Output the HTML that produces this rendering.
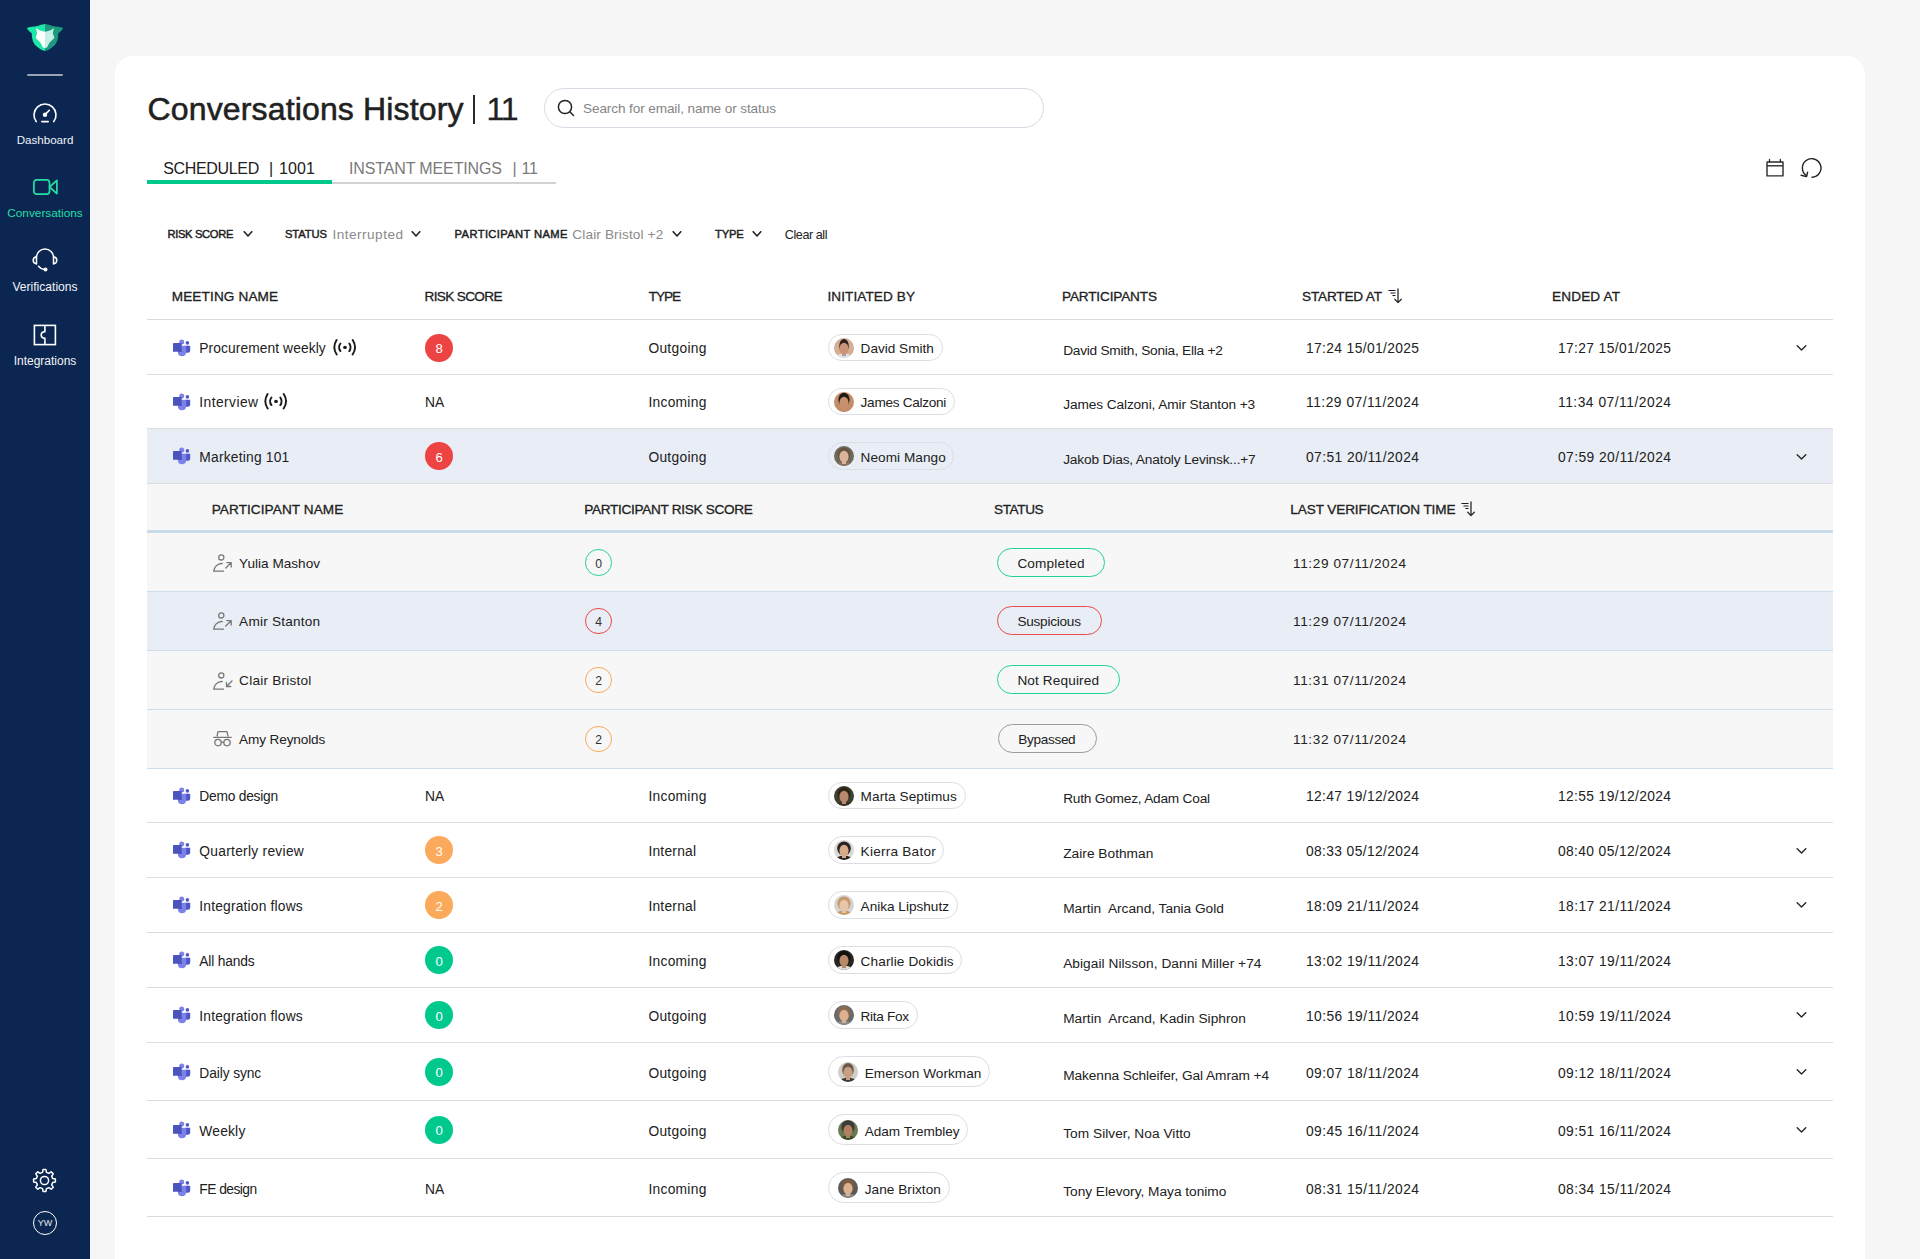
<!DOCTYPE html>
<html><head><meta charset="utf-8"><title>Conversations History</title><style>
*{margin:0;padding:0;box-sizing:border-box}
html,body{width:1920px;height:1259px;overflow:hidden;background:#f6f6f6;font-family:"Liberation Sans",sans-serif}
.a,.t{position:absolute}
.t{white-space:nowrap}
.sidebar{position:absolute;left:0;top:0;width:90px;height:1259px;background:#0b2651}
.card{position:absolute;left:115px;top:56px;width:1750px;height:1300px;background:#fff;border-radius:18px}
.badge{width:28px;height:28px;border-radius:50%;color:#fff;font-size:14px;line-height:28px;text-align:center}
.pill{border:1px solid #dcdee6;border-radius:16px}
.ring{width:26.5px;height:26.5px;border:1.3px solid;border-radius:50%;font-size:12px;line-height:25.5px;text-align:center;color:#333}
.spill{height:29px;border:1.5px solid;border-radius:15px}
</style></head>
<body>
<div class="sidebar"></div>
<div class="card"></div>
<svg class="a" style="left:26px;top:23px" width="38" height="30" viewBox="0 0 38 30">
<path d="M19.0 0.9 L15.1 1.7 L12.3 2.8 L9.0 3.4 L5.7 3.7 L1.8 4.5 L1.0 5.6 L2.9 8.1 L5.7 10.3 L6.0 14.2 L6.8 18.1 L9.0 22.0 L12.3 24.8 L15.7 27.0 L19.0 28.1Z" fill="#1ee8a8"/>
<path d="M19.0 0.9 L22.9 1.7 L25.7 2.8 L29.0 3.4 L32.3 3.7 L36.2 4.5 L37.0 5.6 L35.1 8.1 L32.3 10.3 L32.0 14.2 L31.2 18.1 L29.0 22.0 L25.7 24.8 L22.3 27.0 L19.0 28.1Z" fill="#1c9a7f"/>
<path d="M19.0 8.7 L15.7 8.1 L12.9 7.0 L10.1 5.0 L11.2 10.3 L9.6 14.8 L12.3 17.6 L14.6 19.8 L16.8 24.2 L19.0 25.3Z" fill="#ffffff"/>
<path d="M19.0 8.7 L22.3 8.1 L25.1 7.0 L27.9 5.0 L26.8 10.3 L28.4 14.8 L25.7 17.6 L23.4 19.8 L21.2 24.2 L19.0 25.3Z" fill="#c6efe5"/>
</svg>
<div class="a" style="left:27px;top:74px;width:36px;height:2px;background:#9aa2b3;border-radius:1px"></div>
<svg class="a" style="left:32px;top:103px" width="26" height="20" viewBox="0 0 26 20">
<path d="M4.2 18.6A11 11 0 1 1 21.8 18.6" fill="none" stroke="#fff" stroke-width="1.6" stroke-linecap="round"/>
<circle cx="13" cy="11.8" r="2.2" fill="#fff"/>
<path d="M13 11.8L17.2 7.4" stroke="#fff" stroke-width="1.6" stroke-linecap="round"/>
<path d="M9.8 18.6h6.4" stroke="#fff" stroke-width="1.6" stroke-linecap="round"/>
</svg>
<div class="t " style="left:45.00px;top:134.00px;font-size:11.6px;line-height:11.6px;color:#f1f3f7;transform:translateX(-50%);">Dashboard</div>
<svg class="a" style="left:33px;top:179px" width="25" height="16" viewBox="0 0 25 16">
<rect x="0.9" y="0.9" width="15.6" height="14.2" rx="2.8" fill="none" stroke="#25dfa5" stroke-width="1.7"/>
<path d="M16.5 8L23.9 1.4V14.6z" fill="none" stroke="#25dfa5" stroke-width="1.7" stroke-linejoin="round"/>
</svg>
<div class="t " style="left:45.00px;top:208.00px;font-size:11.8px;line-height:11.8px;color:#25dfa5;transform:translateX(-50%);">Conversations</div>
<svg class="a" style="left:32px;top:248px" width="26" height="24" viewBox="0 0 26 24">
<path d="M4.4 9.5A8.6 8.6 0 0 1 21.6 9.5" fill="none" stroke="#fff" stroke-width="1.5"/>
<path d="M4.5 8.7C2.4 9 1.2 10.3 1.2 12.3s1.2 3.3 3.3 3.6z" fill="none" stroke="#fff" stroke-width="1.5" stroke-linejoin="round"/>
<path d="M21.5 8.7C23.6 9 24.8 10.3 24.8 12.3s-1.2 3.3-3.3 3.6z" fill="none" stroke="#fff" stroke-width="1.5" stroke-linejoin="round"/>
<path d="M6.5 18.2C8 20.3 10 21.2 12.5 21.5" fill="none" stroke="#fff" stroke-width="1.5" stroke-linecap="round"/>
<circle cx="13.5" cy="21.4" r="2" fill="#fff"/>
</svg>
<div class="t " style="left:45.00px;top:281.00px;font-size:12.1px;line-height:12.1px;color:#f1f3f7;transform:translateX(-50%);">Verifications</div>
<svg class="a" style="left:33px;top:324px" width="24" height="22" viewBox="0 0 24 22">
<rect x="1.4" y="1.4" width="21" height="19.2" fill="none" stroke="#fff" stroke-width="1.6"/>
<path d="M11.9 1.4V7.6C9.2 7.8 8.2 9.3 8.2 11s1 3.2 3.7 3.4V20.6" fill="none" stroke="#fff" stroke-width="1.6"/>
</svg>
<div class="t " style="left:45.00px;top:355.00px;font-size:12px;line-height:12px;color:#f1f3f7;transform:translateX(-50%);">Integrations</div>
<svg class="a" style="left:32px;top:1168px" width="25" height="25" viewBox="0 0 25 25">
<path d="M20.67 10.54 L23.40 11.04 L23.40 13.96 L20.67 14.46 L19.66 16.89 L21.24 19.17 L19.17 21.24 L16.89 19.66 L14.46 20.67 L13.96 23.40 L11.04 23.40 L10.54 20.67 L8.11 19.66 L5.83 21.24 L3.76 19.17 L5.34 16.89 L4.33 14.46 L1.60 13.96 L1.60 11.04 L4.33 10.54 L5.34 8.11 L3.76 5.83 L5.83 3.76 L8.11 5.34 L10.54 4.33 L11.04 1.60 L13.96 1.60 L14.46 4.33 L16.89 5.34 L19.17 3.76 L21.24 5.83 L19.66 8.11Z" fill="none" stroke="#fff" stroke-width="1.5" stroke-linejoin="round"/>
<circle cx="12.5" cy="12.5" r="4.1" fill="none" stroke="#fff" stroke-width="1.5"/>
</svg>
<div class="a" style="left:33px;top:1211px;width:24px;height:24px;border:1.8px solid #fff;border-radius:50%"></div>
<div class="t " style="left:45.00px;top:1219.00px;font-size:9px;line-height:9px;color:#e6e9ef;transform:translateX(-50%);">YW</div>
<div class="t " style="left:147.50px;top:93.00px;font-size:32px;line-height:32px;color:#212121;letter-spacing:0.151px;-webkit-text-stroke:0.55px #212121;">Conversations History</div>
<div class="a" style="left:473px;top:95px;width:2px;height:29px;background:#2a2a2a"></div>
<div class="t " style="left:486.50px;top:93.00px;font-size:32px;line-height:32px;color:#212121;letter-spacing:-1.215px;-webkit-text-stroke:0.3px #212121;">11</div>
<div class="a" style="left:544px;top:88px;width:500px;height:40px;border:1px solid #d8d9e4;border-radius:20px;background:#fff"></div>
<svg class="a" style="left:557px;top:99px" width="19" height="19" viewBox="0 0 19 19">
<circle cx="8" cy="8" r="6.6" fill="none" stroke="#222" stroke-width="1.5"/>
<path d="M12.8 12.8L16.5 16.5" stroke="#222" stroke-width="1.5" stroke-linecap="round"/>
</svg>
<div class="t " style="left:583.00px;top:102.00px;font-size:13.6px;line-height:13.6px;color:#858585;letter-spacing:-0.113px;">Search for email, name or status</div>
<div class="t " style="left:163.20px;top:161.00px;font-size:16px;line-height:16px;color:#212121;letter-spacing:-0.336px;">SCHEDULED</div>
<div class="t " style="left:269.00px;top:161.00px;font-size:16px;line-height:16px;color:#212121;">|</div>
<div class="t " style="left:279.00px;top:161.00px;font-size:16px;line-height:16px;color:#212121;letter-spacing:0.137px;">1001</div>
<div class="t " style="left:349.00px;top:161.00px;font-size:16px;line-height:16px;color:#7a7a7a;letter-spacing:-0.132px;">INSTANT MEETINGS</div>
<div class="t " style="left:512.50px;top:161.00px;font-size:16px;line-height:16px;color:#7a7a7a;">|</div>
<div class="t " style="left:521.60px;top:161.00px;font-size:16px;line-height:16px;color:#7a7a7a;letter-spacing:-0.208px;">11</div>
<div class="a" style="left:332px;top:182px;width:224px;height:2px;background:#d2d2d2"></div>
<div class="a" style="left:147px;top:180px;width:185px;height:4px;background:#00c98e"></div>
<svg class="a" style="left:1764px;top:157px" width="22" height="21" viewBox="0 0 22 21">
<rect x="3" y="5" width="16" height="13.9" rx="0.2" fill="none" stroke="#2a2a2e" stroke-width="1.4"/>
<path d="M3 8.8h16" stroke="#2a2a2e" stroke-width="1.4"/>
<path d="M5.5 2.4v2.4M16.4 2.4v2.4" stroke="#2a2a2e" stroke-width="1.3" stroke-linecap="round"/>
</svg>
<svg class="a" style="left:1799px;top:156px" width="25" height="24" viewBox="0 0 25 24">
<path d="M13 21.3A9.3 9.3 0 1 0 7.77 19.9" fill="none" stroke="#222226" stroke-width="1.4" stroke-linecap="round"/>
<path d="M2.2 19.3L7.4 20.6L8.6 16.2" fill="none" stroke="#222226" stroke-width="1.4" stroke-linecap="round" stroke-linejoin="round"/>
</svg>
<div class="t " style="left:167.50px;top:229.00px;font-size:11.2px;line-height:11.2px;color:#212121;letter-spacing:-0.343px;-webkit-text-stroke:0.45px #212121;">RISK SCORE</div>
<svg class="a" style="left:243px;top:230.5px" width="10" height="6" viewBox="0 0 10 6"><path d="M1.2 0.8L5.0 5L8.8 0.8" fill="none" stroke="#222" stroke-width="1.6" stroke-linecap="round" stroke-linejoin="round"/></svg>
<div class="t " style="left:285.00px;top:229.00px;font-size:11.2px;line-height:11.2px;color:#212121;letter-spacing:-0.104px;-webkit-text-stroke:0.45px #212121;">STATUS</div>
<div class="t " style="left:332.60px;top:228.00px;font-size:13.6px;line-height:13.6px;color:#8a8a8a;letter-spacing:0.463px;">Interrupted</div>
<svg class="a" style="left:410.5px;top:230.5px" width="10" height="6" viewBox="0 0 10 6"><path d="M1.2 0.8L5.0 5L8.8 0.8" fill="none" stroke="#222" stroke-width="1.6" stroke-linecap="round" stroke-linejoin="round"/></svg>
<div class="t " style="left:454.60px;top:229.00px;font-size:11.2px;line-height:11.2px;color:#212121;letter-spacing:0.370px;-webkit-text-stroke:0.45px #212121;">PARTICIPANT NAME</div>
<div class="t " style="left:572.30px;top:228.00px;font-size:13.6px;line-height:13.6px;color:#8a8a8a;letter-spacing:0.146px;">Clair Bristol +2</div>
<svg class="a" style="left:672px;top:230.5px" width="10" height="6" viewBox="0 0 10 6"><path d="M1.2 0.8L5.0 5L8.8 0.8" fill="none" stroke="#222" stroke-width="1.6" stroke-linecap="round" stroke-linejoin="round"/></svg>
<div class="t " style="left:715.00px;top:229.00px;font-size:11.2px;line-height:11.2px;color:#212121;letter-spacing:-0.168px;-webkit-text-stroke:0.45px #212121;">TYPE</div>
<svg class="a" style="left:751.5px;top:230.5px" width="10" height="6" viewBox="0 0 10 6"><path d="M1.2 0.8L5.0 5L8.8 0.8" fill="none" stroke="#222" stroke-width="1.6" stroke-linecap="round" stroke-linejoin="round"/></svg>
<div class="t " style="left:784.80px;top:229.00px;font-size:12.6px;line-height:12.6px;color:#212121;letter-spacing:-0.439px;">Clear all</div>
<div class="t " style="left:171.70px;top:290.00px;font-size:13.6px;line-height:13.6px;color:#212121;letter-spacing:0.134px;-webkit-text-stroke:0.3px #212121;">MEETING NAME</div>
<div class="t " style="left:424.50px;top:290.00px;font-size:13.6px;line-height:13.6px;color:#212121;letter-spacing:-0.654px;-webkit-text-stroke:0.3px #212121;">RISK SCORE</div>
<div class="t " style="left:648.70px;top:290.00px;font-size:13.6px;line-height:13.6px;color:#212121;letter-spacing:-1.007px;-webkit-text-stroke:0.3px #212121;">TYPE</div>
<div class="t " style="left:827.50px;top:290.00px;font-size:13.6px;line-height:13.6px;color:#212121;letter-spacing:0.078px;-webkit-text-stroke:0.3px #212121;">INITIATED BY</div>
<div class="t " style="left:1062.00px;top:290.00px;font-size:13.6px;line-height:13.6px;color:#212121;letter-spacing:-0.157px;-webkit-text-stroke:0.3px #212121;">PARTICIPANTS</div>
<div class="t " style="left:1302.00px;top:290.00px;font-size:13.6px;line-height:13.6px;color:#212121;letter-spacing:-0.179px;-webkit-text-stroke:0.3px #212121;">STARTED AT</div>
<svg class="a" style="left:1388px;top:288px" width="15" height="16" viewBox="0 0 15 16">
<path d="M0.9 2.5h6.2M2.9 5h4.2M4.9 7.5h2.2" stroke="#1a1a2a" stroke-width="1.2" fill="none" stroke-linecap="round"/>
<path d="M10 1v13.6M6.8 11.2L10 14.6L13.3 11.2" stroke="#2a2a2a" stroke-width="1.3" fill="none" stroke-linejoin="round" stroke-linecap="round"/>
</svg>
<div class="t " style="left:1552.00px;top:290.00px;font-size:13.6px;line-height:13.6px;color:#212121;letter-spacing:0.142px;-webkit-text-stroke:0.3px #212121;">ENDED AT</div>
<div class="a" style="left:147px;top:319px;width:1686px;height:1px;background:#dcdcdc"></div>
<div class="a" style="left:147px;top:374px;width:1686px;height:1px;background:#dcdcdc"></div>
<svg class="a" style="left:173px;top:338px" width="18" height="19" viewBox="0 0 18 19">
<circle cx="14.4" cy="4.9" r="1.8" fill="#4f58c8"/>
<path d="M12.6 7.8H17.2V12.4A2.3 2.3 0 0 1 14.9 14.7H12.6z" fill="#4f58c8"/>
<circle cx="8.7" cy="3.9" r="2.5" fill="#7b83eb"/>
<path d="M4.9 7.8H13.1V14.2A3.9 3.9 0 0 1 4.9 14.2z" fill="#7b83eb"/>
<rect x="0" y="5.1" width="8.7" height="8.7" rx="0.4" fill="#4b53bc"/>
<path d="M5.5 13.8H8.7V12.6z" fill="#3a3f7a" opacity="0.5"/>
</svg>
<div class="t " style="left:199.30px;top:342.00px;font-size:13.8px;line-height:13.8px;color:#212121;letter-spacing:0.082px;">Procurement weekly</div>
<svg class="a" style="left:333px;top:339px" width="24" height="17" viewBox="0 0 24 17">
<g fill="none" stroke="#1a1a1a" stroke-width="1.9" stroke-linecap="round">
<path d="M3.6 1Q-1.05 8.25 3.7 15.5"/><path d="M19.7 1Q24.5 8.25 19.6 15.5"/>
<path d="M7.5 4.5Q4.5 8.3 7.5 12.1"/><path d="M16.3 4.5Q18.9 8.3 16.3 12.1"/>
</g><ellipse cx="12" cy="8.4" rx="1.9" ry="1.7" fill="#1a1a1a"/>
</svg>
<div class="a badge" style="left:425px;top:333.5px;background:#ee4343"></div>
<div class="t " style="left:439.20px;top:342.00px;font-size:13.2px;line-height:13.2px;color:#fff;transform:translateX(-50%);">8</div>
<div class="t " style="left:648.40px;top:342.00px;font-size:13.8px;line-height:13.8px;color:#212121;letter-spacing:0.280px;">Outgoing</div>
<div class="a pill" style="left:828px;top:333.6px;width:115px;height:27.5px"></div>
<svg class="a" style="left:834px;top:338px" width="20" height="20" viewBox="0 0 20 20">
<defs><clipPath id="c834338"><circle cx="10" cy="10" r="10"/></clipPath></defs>
<g clip-path="url(#c834338)"><rect width="20" height="20" fill="#d6ae94"/>
<ellipse cx="10" cy="21" rx="9" ry="5.5" fill="#d8e4ee"/>
<rect x="8" y="13" width="4" height="5" fill="#c99478"/>
<ellipse cx="10" cy="8.0" rx="4.8" ry="7" fill="#2a2220"/>
<ellipse cx="10" cy="10.6" rx="4.6" ry="5.8" fill="#c99478"/>
</g></svg>
<div class="t " style="left:860.60px;top:342.00px;font-size:13.6px;line-height:13.6px;color:#212121;letter-spacing:-0.001px;">David Smith</div>
<div class="t " style="left:1063.20px;top:344.00px;font-size:13.7px;line-height:13.7px;color:#212121;letter-spacing:-0.257px;">David Smith, Sonia, Ella +2</div>
<div class="t " style="left:1306.00px;top:342.00px;font-size:13.8px;line-height:13.8px;color:#212121;letter-spacing:0.372px;">17:24 15/01/2025</div>
<div class="t " style="left:1558.00px;top:342.00px;font-size:13.8px;line-height:13.8px;color:#212121;letter-spacing:0.372px;">17:27 15/01/2025</div>
<svg class="a" style="left:1796px;top:345px" width="11" height="6" viewBox="0 0 11 6"><path d="M1.2 0.8L5.5 5L9.8 0.8" fill="none" stroke="#222" stroke-width="1.35" stroke-linecap="round" stroke-linejoin="round"/></svg>
<div class="a" style="left:147px;top:428px;width:1686px;height:1px;background:#dcdcdc"></div>
<svg class="a" style="left:173px;top:392px" width="18" height="19" viewBox="0 0 18 19">
<circle cx="14.4" cy="4.9" r="1.8" fill="#4f58c8"/>
<path d="M12.6 7.8H17.2V12.4A2.3 2.3 0 0 1 14.9 14.7H12.6z" fill="#4f58c8"/>
<circle cx="8.7" cy="3.9" r="2.5" fill="#7b83eb"/>
<path d="M4.9 7.8H13.1V14.2A3.9 3.9 0 0 1 4.9 14.2z" fill="#7b83eb"/>
<rect x="0" y="5.1" width="8.7" height="8.7" rx="0.4" fill="#4b53bc"/>
<path d="M5.5 13.8H8.7V12.6z" fill="#3a3f7a" opacity="0.5"/>
</svg>
<div class="t " style="left:199.30px;top:396.00px;font-size:13.8px;line-height:13.8px;color:#212121;letter-spacing:0.435px;">Interview</div>
<svg class="a" style="left:264px;top:393px" width="24" height="17" viewBox="0 0 24 17">
<g fill="none" stroke="#1a1a1a" stroke-width="1.9" stroke-linecap="round">
<path d="M3.6 1Q-1.05 8.25 3.7 15.5"/><path d="M19.7 1Q24.5 8.25 19.6 15.5"/>
<path d="M7.5 4.5Q4.5 8.3 7.5 12.1"/><path d="M16.3 4.5Q18.9 8.3 16.3 12.1"/>
</g><ellipse cx="12" cy="8.4" rx="1.9" ry="1.7" fill="#1a1a1a"/>
</svg>
<div class="t " style="left:425.00px;top:396.00px;font-size:13.8px;line-height:13.8px;color:#212121;">NA</div>
<div class="t " style="left:648.40px;top:396.00px;font-size:13.8px;line-height:13.8px;color:#212121;letter-spacing:0.280px;">Incoming</div>
<div class="a pill" style="left:828px;top:387.6px;width:127px;height:27.5px"></div>
<svg class="a" style="left:834px;top:392px" width="20" height="20" viewBox="0 0 20 20">
<defs><clipPath id="c834392"><circle cx="10" cy="10" r="10"/></clipPath></defs>
<g clip-path="url(#c834392)"><rect width="20" height="20" fill="#c48c68"/>
<ellipse cx="10" cy="21" rx="9" ry="5.5" fill="#c48c68"/>
<rect x="8" y="13" width="4" height="5" fill="#c8906c"/>
<ellipse cx="10" cy="7.7" rx="5.6" ry="7" fill="#1e1a18"/>
<ellipse cx="10" cy="10.6" rx="4.6" ry="5.8" fill="#c8906c"/>
</g></svg>
<div class="t " style="left:860.60px;top:396.00px;font-size:13.6px;line-height:13.6px;color:#212121;letter-spacing:-0.282px;">James Calzoni</div>
<div class="t " style="left:1063.20px;top:398.00px;font-size:13.7px;line-height:13.7px;color:#212121;letter-spacing:-0.107px;">James Calzoni, Amir Stanton +3</div>
<div class="t " style="left:1306.00px;top:396.00px;font-size:13.8px;line-height:13.8px;color:#212121;letter-spacing:0.508px;">11:29 07/11/2024</div>
<div class="t " style="left:1558.00px;top:396.00px;font-size:13.8px;line-height:13.8px;color:#212121;letter-spacing:0.508px;">11:34 07/11/2024</div>
<div class="a" style="left:147px;top:429px;width:1686px;height:54px;background:#e9edf5"></div>
<div class="a" style="left:147px;top:483px;width:1686px;height:1px;background:#dcdcdc"></div>
<svg class="a" style="left:173px;top:446px" width="18" height="19" viewBox="0 0 18 19">
<circle cx="14.4" cy="4.9" r="1.8" fill="#4f58c8"/>
<path d="M12.6 7.8H17.2V12.4A2.3 2.3 0 0 1 14.9 14.7H12.6z" fill="#4f58c8"/>
<circle cx="8.7" cy="3.9" r="2.5" fill="#7b83eb"/>
<path d="M4.9 7.8H13.1V14.2A3.9 3.9 0 0 1 4.9 14.2z" fill="#7b83eb"/>
<rect x="0" y="5.1" width="8.7" height="8.7" rx="0.4" fill="#4b53bc"/>
<path d="M5.5 13.8H8.7V12.6z" fill="#3a3f7a" opacity="0.5"/>
</svg>
<div class="t " style="left:199.30px;top:451.00px;font-size:13.8px;line-height:13.8px;color:#212121;letter-spacing:0.213px;">Marketing 101</div>
<div class="a badge" style="left:425px;top:442.0px;background:#ee4343"></div>
<div class="t " style="left:439.20px;top:451.00px;font-size:13.2px;line-height:13.2px;color:#fff;transform:translateX(-50%);">6</div>
<div class="t " style="left:648.40px;top:451.00px;font-size:13.8px;line-height:13.8px;color:#212121;letter-spacing:0.280px;">Outgoing</div>
<div class="a pill" style="left:828px;top:442.1px;width:126px;height:27.5px"></div>
<svg class="a" style="left:834px;top:446px" width="20" height="20" viewBox="0 0 20 20">
<defs><clipPath id="c834446"><circle cx="10" cy="10" r="10"/></clipPath></defs>
<g clip-path="url(#c834446)"><rect width="20" height="20" fill="#6c6a5c"/>
<ellipse cx="10" cy="21" rx="9" ry="5.5" fill="#8a7060"/>
<rect x="8" y="13" width="4" height="5" fill="#dcb49a"/>
<ellipse cx="10" cy="8.5" rx="6.5" ry="7" fill="#6a5440"/>
<ellipse cx="10" cy="10.6" rx="4.6" ry="5.8" fill="#dcb49a"/>
</g></svg>
<div class="t " style="left:860.60px;top:451.00px;font-size:13.6px;line-height:13.6px;color:#212121;letter-spacing:0.054px;">Neomi Mango</div>
<div class="t " style="left:1063.20px;top:453.00px;font-size:13.7px;line-height:13.7px;color:#212121;letter-spacing:-0.158px;">Jakob Dias, Anatoly Levinsk...+7</div>
<div class="t " style="left:1306.00px;top:451.00px;font-size:13.8px;line-height:13.8px;color:#212121;letter-spacing:0.440px;">07:51 20/11/2024</div>
<div class="t " style="left:1558.00px;top:451.00px;font-size:13.8px;line-height:13.8px;color:#212121;letter-spacing:0.440px;">07:59 20/11/2024</div>
<svg class="a" style="left:1796px;top:454px" width="11" height="6" viewBox="0 0 11 6"><path d="M1.2 0.8L5.5 5L9.8 0.8" fill="none" stroke="#222" stroke-width="1.35" stroke-linecap="round" stroke-linejoin="round"/></svg>
<div class="a" style="left:147px;top:484px;width:1686px;height:284px;background:#f7f7f7"></div>
<div class="a" style="left:147px;top:530px;width:1686px;height:3px;background:#c9dcec"></div>
<div class="t " style="left:211.70px;top:503.00px;font-size:13.6px;line-height:13.6px;color:#212121;letter-spacing:0.081px;-webkit-text-stroke:0.3px #212121;">PARTICIPANT NAME</div>
<div class="t " style="left:584.30px;top:503.00px;font-size:13.6px;line-height:13.6px;color:#212121;letter-spacing:-0.304px;-webkit-text-stroke:0.3px #212121;">PARTICIPANT RISK SCORE</div>
<div class="t " style="left:994.00px;top:503.00px;font-size:13.6px;line-height:13.6px;color:#212121;letter-spacing:-0.386px;-webkit-text-stroke:0.3px #212121;">STATUS</div>
<div class="t " style="left:1290.30px;top:503.00px;font-size:13.6px;line-height:13.6px;color:#212121;letter-spacing:-0.117px;-webkit-text-stroke:0.3px #212121;">LAST VERIFICATION TIME</div>
<svg class="a" style="left:1461px;top:501px" width="15" height="16" viewBox="0 0 15 16">
<path d="M0.9 2.5h6.2M2.9 5h4.2M4.9 7.5h2.2" stroke="#1a1a2a" stroke-width="1.2" fill="none" stroke-linecap="round"/>
<path d="M10 1v13.6M6.8 11.2L10 14.6L13.3 11.2" stroke="#2a2a2a" stroke-width="1.3" fill="none" stroke-linejoin="round" stroke-linecap="round"/>
</svg>
<div class="a" style="left:147px;top:591px;width:1686px;height:1px;background:#cadeee"></div>
<svg class="a" style="left:213px;top:554px" width="20" height="18" viewBox="0 0 20 18">
<circle cx="8.3" cy="3.4" r="2.6" stroke="#777" stroke-width="1.3" fill="none"/>
<path d="M1 17.2c-0.4-1.5 0.5-3.4 2.2-5.3 1.5-1.6 3.8-2.5 6-2.4" stroke="#777" stroke-width="1.3" fill="none" stroke-linecap="round"/>
<path d="M1 17.2h9.5" stroke="#777" stroke-width="1.3" fill="none" stroke-linecap="round"/>
<path d="M12.8 14L18.2 8.6M18.2 8.6h-4.4M18.2 8.6v4.4" stroke="#777" stroke-width="1.3" fill="none" stroke-linecap="round"/></svg>
<div class="t " style="left:239.10px;top:557.00px;font-size:13.6px;line-height:13.6px;color:#212121;letter-spacing:0.010px;">Yulia Mashov</div>
<div class="a ring" style="left:585px;top:549.0px;border-color:#27cf9d"></div>
<div class="t " style="left:598.60px;top:558.00px;font-size:12.2px;line-height:12.2px;color:#333;transform:translateX(-50%);">0</div>
<div class="a spill" style="left:997px;top:547.5px;width:108px;border-color:#20d19c"></div>
<div class="t " style="left:1017.40px;top:557.00px;font-size:13.6px;line-height:13.6px;color:#212121;letter-spacing:0.167px;">Completed</div>
<div class="t " style="left:1293.00px;top:557.00px;font-size:13.6px;line-height:13.6px;color:#212121;letter-spacing:0.610px;">11:29 07/11/2024</div>
<div class="a" style="left:147px;top:592px;width:1686px;height:58px;background:#e9edf5"></div>
<div class="a" style="left:147px;top:650px;width:1686px;height:1px;background:#cadeee"></div>
<svg class="a" style="left:213px;top:612px" width="20" height="18" viewBox="0 0 20 18">
<circle cx="8.3" cy="3.4" r="2.6" stroke="#777" stroke-width="1.3" fill="none"/>
<path d="M1 17.2c-0.4-1.5 0.5-3.4 2.2-5.3 1.5-1.6 3.8-2.5 6-2.4" stroke="#777" stroke-width="1.3" fill="none" stroke-linecap="round"/>
<path d="M1 17.2h9.5" stroke="#777" stroke-width="1.3" fill="none" stroke-linecap="round"/>
<path d="M12.8 14L18.2 8.6M18.2 8.6h-4.4M18.2 8.6v4.4" stroke="#777" stroke-width="1.3" fill="none" stroke-linecap="round"/></svg>
<div class="t " style="left:239.10px;top:615.00px;font-size:13.6px;line-height:13.6px;color:#212121;letter-spacing:0.217px;">Amir Stanton</div>
<div class="a ring" style="left:585px;top:607.5px;border-color:#ea4848"></div>
<div class="t " style="left:598.60px;top:616.00px;font-size:12.2px;line-height:12.2px;color:#333;transform:translateX(-50%);">4</div>
<div class="a spill" style="left:997px;top:606.0px;width:105px;border-color:#ec4c4c"></div>
<div class="t " style="left:1017.40px;top:615.00px;font-size:13.6px;line-height:13.6px;color:#212121;letter-spacing:-0.241px;">Suspicious</div>
<div class="t " style="left:1293.00px;top:615.00px;font-size:13.6px;line-height:13.6px;color:#212121;letter-spacing:0.610px;">11:29 07/11/2024</div>
<div class="a" style="left:147px;top:709px;width:1686px;height:1px;background:#cadeee"></div>
<svg class="a" style="left:213px;top:672px" width="20" height="18" viewBox="0 0 20 18">
<circle cx="8.3" cy="3.4" r="2.6" stroke="#777" stroke-width="1.3" fill="none"/>
<path d="M1 17.2c-0.4-1.5 0.5-3.4 2.2-5.3 1.5-1.6 3.8-2.5 6-2.4" stroke="#777" stroke-width="1.3" fill="none" stroke-linecap="round"/>
<path d="M1 17.2h9.5" stroke="#777" stroke-width="1.3" fill="none" stroke-linecap="round"/>
<path d="M19 9L13.5 14.5M13.5 14.5h4.2M13.5 14.5v-4.2" stroke="#777" stroke-width="1.3" fill="none" stroke-linecap="round"/></svg>
<div class="t " style="left:239.10px;top:674.00px;font-size:13.6px;line-height:13.6px;color:#212121;letter-spacing:0.232px;">Clair Bristol</div>
<div class="a ring" style="left:585px;top:666.5px;border-color:#fbaa5e"></div>
<div class="t " style="left:598.60px;top:675.00px;font-size:12.2px;line-height:12.2px;color:#333;transform:translateX(-50%);">2</div>
<div class="a spill" style="left:997px;top:665.0px;width:122.5px;border-color:#20d19c"></div>
<div class="t " style="left:1017.40px;top:674.00px;font-size:13.6px;line-height:13.6px;color:#212121;letter-spacing:0.134px;">Not Required</div>
<div class="t " style="left:1293.00px;top:674.00px;font-size:13.6px;line-height:13.6px;color:#212121;letter-spacing:0.610px;">11:31 07/11/2024</div>
<div class="a" style="left:147px;top:768px;width:1686px;height:1px;background:#cadeee"></div>
<svg class="a" style="left:213px;top:730px" width="19" height="17" viewBox="0 0 19 17">
<path d="M4 6.5L5 1.6h9l1 4.9" stroke="#777" stroke-width="1.3" fill="none" stroke-linejoin="round"/>
<path d="M0.8 7.3h17.4" stroke="#777" stroke-width="1.3" fill="none" stroke-linecap="round"/>
<circle cx="5" cy="12.6" r="3.2" stroke="#777" stroke-width="1.3" fill="none"/>
<circle cx="14" cy="12.6" r="3.2" stroke="#777" stroke-width="1.3" fill="none"/>
<path d="M8.2 12.3h2.6" stroke="#777" stroke-width="1.3"/>
</svg>
<div class="t " style="left:239.10px;top:733.00px;font-size:13.6px;line-height:13.6px;color:#212121;letter-spacing:-0.125px;">Amy Reynolds</div>
<div class="a ring" style="left:585px;top:725.5px;border-color:#fbaa5e"></div>
<div class="t " style="left:598.60px;top:734.00px;font-size:12.2px;line-height:12.2px;color:#333;transform:translateX(-50%);">2</div>
<div class="a spill" style="left:998px;top:724.0px;width:98.5px;border-color:#9c9c9c"></div>
<div class="t " style="left:1018.30px;top:733.00px;font-size:13.6px;line-height:13.6px;color:#212121;letter-spacing:-0.332px;">Bypassed</div>
<div class="t " style="left:1293.00px;top:733.00px;font-size:13.6px;line-height:13.6px;color:#212121;letter-spacing:0.610px;">11:32 07/11/2024</div>
<div class="a" style="left:147px;top:822px;width:1686px;height:1px;background:#dcdcdc"></div>
<svg class="a" style="left:173px;top:786px" width="18" height="19" viewBox="0 0 18 19">
<circle cx="14.4" cy="4.9" r="1.8" fill="#4f58c8"/>
<path d="M12.6 7.8H17.2V12.4A2.3 2.3 0 0 1 14.9 14.7H12.6z" fill="#4f58c8"/>
<circle cx="8.7" cy="3.9" r="2.5" fill="#7b83eb"/>
<path d="M4.9 7.8H13.1V14.2A3.9 3.9 0 0 1 4.9 14.2z" fill="#7b83eb"/>
<rect x="0" y="5.1" width="8.7" height="8.7" rx="0.4" fill="#4b53bc"/>
<path d="M5.5 13.8H8.7V12.6z" fill="#3a3f7a" opacity="0.5"/>
</svg>
<div class="t " style="left:199.30px;top:790.00px;font-size:13.8px;line-height:13.8px;color:#212121;letter-spacing:-0.241px;">Demo design</div>
<div class="t " style="left:425.00px;top:790.00px;font-size:13.8px;line-height:13.8px;color:#212121;">NA</div>
<div class="t " style="left:648.40px;top:790.00px;font-size:13.8px;line-height:13.8px;color:#212121;letter-spacing:0.280px;">Incoming</div>
<div class="a pill" style="left:828px;top:781.5px;width:138px;height:27.5px"></div>
<svg class="a" style="left:834px;top:786px" width="20" height="20" viewBox="0 0 20 20">
<defs><clipPath id="c834786"><circle cx="10" cy="10" r="10"/></clipPath></defs>
<g clip-path="url(#c834786)"><rect width="20" height="20" fill="#3e4030"/>
<ellipse cx="10" cy="21" rx="9" ry="5.5" fill="#3a3020"/>
<rect x="8" y="13" width="4" height="5" fill="#b98a70"/>
<ellipse cx="10" cy="8.1" rx="6.4" ry="7" fill="#2e2418"/>
<ellipse cx="10" cy="10.6" rx="4.6" ry="5.8" fill="#b98a70"/>
</g></svg>
<div class="t " style="left:860.60px;top:790.00px;font-size:13.6px;line-height:13.6px;color:#212121;letter-spacing:0.075px;">Marta Septimus</div>
<div class="t " style="left:1063.20px;top:792.00px;font-size:13.7px;line-height:13.7px;color:#212121;letter-spacing:-0.226px;">Ruth Gomez, Adam Coal</div>
<div class="t " style="left:1306.00px;top:790.00px;font-size:13.8px;line-height:13.8px;color:#212121;letter-spacing:0.372px;">12:47 19/12/2024</div>
<div class="t " style="left:1558.00px;top:790.00px;font-size:13.8px;line-height:13.8px;color:#212121;letter-spacing:0.372px;">12:55 19/12/2024</div>
<div class="a" style="left:147px;top:877px;width:1686px;height:1px;background:#dcdcdc"></div>
<svg class="a" style="left:173px;top:840px" width="18" height="19" viewBox="0 0 18 19">
<circle cx="14.4" cy="4.9" r="1.8" fill="#4f58c8"/>
<path d="M12.6 7.8H17.2V12.4A2.3 2.3 0 0 1 14.9 14.7H12.6z" fill="#4f58c8"/>
<circle cx="8.7" cy="3.9" r="2.5" fill="#7b83eb"/>
<path d="M4.9 7.8H13.1V14.2A3.9 3.9 0 0 1 4.9 14.2z" fill="#7b83eb"/>
<rect x="0" y="5.1" width="8.7" height="8.7" rx="0.4" fill="#4b53bc"/>
<path d="M5.5 13.8H8.7V12.6z" fill="#3a3f7a" opacity="0.5"/>
</svg>
<div class="t " style="left:199.30px;top:845.00px;font-size:13.8px;line-height:13.8px;color:#212121;letter-spacing:0.270px;">Quarterly review</div>
<div class="a badge" style="left:425px;top:836.0px;background:#fba95a"></div>
<div class="t " style="left:439.20px;top:845.00px;font-size:13.2px;line-height:13.2px;color:#fff;transform:translateX(-50%);">3</div>
<div class="t " style="left:648.40px;top:845.00px;font-size:13.8px;line-height:13.8px;color:#212121;letter-spacing:0.230px;">Internal</div>
<div class="a pill" style="left:828px;top:836.0px;width:116px;height:27.5px"></div>
<svg class="a" style="left:834px;top:840px" width="20" height="20" viewBox="0 0 20 20">
<defs><clipPath id="c834840"><circle cx="10" cy="10" r="10"/></clipPath></defs>
<g clip-path="url(#c834840)"><rect width="20" height="20" fill="#d8d8d8"/>
<ellipse cx="10" cy="21" rx="9" ry="5.5" fill="#2a2220"/>
<rect x="8" y="13" width="4" height="5" fill="#d8aa8a"/>
<ellipse cx="10" cy="8.5" rx="6.8" ry="7" fill="#2a2220"/>
<ellipse cx="10" cy="10.6" rx="4.6" ry="5.8" fill="#d8aa8a"/>
</g></svg>
<div class="t " style="left:860.60px;top:845.00px;font-size:13.6px;line-height:13.6px;color:#212121;letter-spacing:0.240px;">Kierra Bator</div>
<div class="t " style="left:1063.20px;top:847.00px;font-size:13.7px;line-height:13.7px;color:#212121;letter-spacing:0.029px;">Zaire Bothman</div>
<div class="t " style="left:1306.00px;top:845.00px;font-size:13.8px;line-height:13.8px;color:#212121;letter-spacing:0.372px;">08:33 05/12/2024</div>
<div class="t " style="left:1558.00px;top:845.00px;font-size:13.8px;line-height:13.8px;color:#212121;letter-spacing:0.372px;">08:40 05/12/2024</div>
<svg class="a" style="left:1796px;top:848px" width="11" height="6" viewBox="0 0 11 6"><path d="M1.2 0.8L5.5 5L9.8 0.8" fill="none" stroke="#222" stroke-width="1.35" stroke-linecap="round" stroke-linejoin="round"/></svg>
<div class="a" style="left:147px;top:932px;width:1686px;height:1px;background:#dcdcdc"></div>
<svg class="a" style="left:173px;top:895px" width="18" height="19" viewBox="0 0 18 19">
<circle cx="14.4" cy="4.9" r="1.8" fill="#4f58c8"/>
<path d="M12.6 7.8H17.2V12.4A2.3 2.3 0 0 1 14.9 14.7H12.6z" fill="#4f58c8"/>
<circle cx="8.7" cy="3.9" r="2.5" fill="#7b83eb"/>
<path d="M4.9 7.8H13.1V14.2A3.9 3.9 0 0 1 4.9 14.2z" fill="#7b83eb"/>
<rect x="0" y="5.1" width="8.7" height="8.7" rx="0.4" fill="#4b53bc"/>
<path d="M5.5 13.8H8.7V12.6z" fill="#3a3f7a" opacity="0.5"/>
</svg>
<div class="t " style="left:199.30px;top:900.00px;font-size:13.8px;line-height:13.8px;color:#212121;letter-spacing:0.182px;">Integration flows</div>
<div class="a badge" style="left:425px;top:891.0px;background:#fba95a"></div>
<div class="t " style="left:439.20px;top:900.00px;font-size:13.2px;line-height:13.2px;color:#fff;transform:translateX(-50%);">2</div>
<div class="t " style="left:648.40px;top:900.00px;font-size:13.8px;line-height:13.8px;color:#212121;letter-spacing:0.230px;">Internal</div>
<div class="a pill" style="left:828px;top:891.0px;width:130px;height:27.5px"></div>
<svg class="a" style="left:834px;top:895px" width="20" height="20" viewBox="0 0 20 20">
<defs><clipPath id="c834895"><circle cx="10" cy="10" r="10"/></clipPath></defs>
<g clip-path="url(#c834895)"><rect width="20" height="20" fill="#d4d4d4"/>
<ellipse cx="10" cy="21" rx="9" ry="5.5" fill="#c89868"/>
<rect x="8" y="13" width="4" height="5" fill="#e8c4a8"/>
<ellipse cx="10" cy="8.5" rx="6.6" ry="7" fill="#c89868"/>
<ellipse cx="10" cy="10.6" rx="4.6" ry="5.8" fill="#e8c4a8"/>
</g></svg>
<div class="t " style="left:860.60px;top:900.00px;font-size:13.6px;line-height:13.6px;color:#212121;letter-spacing:-0.004px;">Anika Lipshutz</div>
<div class="t " style="left:1063.20px;top:902.00px;font-size:13.7px;line-height:13.7px;color:#212121;letter-spacing:-0.015px;">Martin&nbsp; Arcand, Tania Gold</div>
<div class="t " style="left:1306.00px;top:900.00px;font-size:13.8px;line-height:13.8px;color:#212121;letter-spacing:0.440px;">18:09 21/11/2024</div>
<div class="t " style="left:1558.00px;top:900.00px;font-size:13.8px;line-height:13.8px;color:#212121;letter-spacing:0.440px;">18:17 21/11/2024</div>
<svg class="a" style="left:1796px;top:902px" width="11" height="6" viewBox="0 0 11 6"><path d="M1.2 0.8L5.5 5L9.8 0.8" fill="none" stroke="#222" stroke-width="1.35" stroke-linecap="round" stroke-linejoin="round"/></svg>
<div class="a" style="left:147px;top:987px;width:1686px;height:1px;background:#dcdcdc"></div>
<svg class="a" style="left:173px;top:950px" width="18" height="19" viewBox="0 0 18 19">
<circle cx="14.4" cy="4.9" r="1.8" fill="#4f58c8"/>
<path d="M12.6 7.8H17.2V12.4A2.3 2.3 0 0 1 14.9 14.7H12.6z" fill="#4f58c8"/>
<circle cx="8.7" cy="3.9" r="2.5" fill="#7b83eb"/>
<path d="M4.9 7.8H13.1V14.2A3.9 3.9 0 0 1 4.9 14.2z" fill="#7b83eb"/>
<rect x="0" y="5.1" width="8.7" height="8.7" rx="0.4" fill="#4b53bc"/>
<path d="M5.5 13.8H8.7V12.6z" fill="#3a3f7a" opacity="0.5"/>
</svg>
<div class="t " style="left:199.30px;top:955.00px;font-size:13.8px;line-height:13.8px;color:#212121;letter-spacing:-0.183px;">All hands</div>
<div class="a badge" style="left:425px;top:946.0px;background:#00c98e"></div>
<div class="t " style="left:439.20px;top:955.00px;font-size:13.2px;line-height:13.2px;color:#fff;transform:translateX(-50%);">0</div>
<div class="t " style="left:648.40px;top:955.00px;font-size:13.8px;line-height:13.8px;color:#212121;letter-spacing:0.280px;">Incoming</div>
<div class="a pill" style="left:828px;top:946.0px;width:134px;height:27.5px"></div>
<svg class="a" style="left:834px;top:950px" width="20" height="20" viewBox="0 0 20 20">
<defs><clipPath id="c834950"><circle cx="10" cy="10" r="10"/></clipPath></defs>
<g clip-path="url(#c834950)"><rect width="20" height="20" fill="#2a2420"/>
<ellipse cx="10" cy="21" rx="9" ry="5.5" fill="#ddd"/>
<rect x="8" y="13" width="4" height="5" fill="#b88a6a"/>
<ellipse cx="10" cy="7.7" rx="6.6" ry="7" fill="#141210"/>
<ellipse cx="10" cy="10.6" rx="4.6" ry="5.8" fill="#b88a6a"/>
</g></svg>
<div class="t " style="left:860.60px;top:955.00px;font-size:13.6px;line-height:13.6px;color:#212121;letter-spacing:0.118px;">Charlie Dokidis</div>
<div class="t " style="left:1063.20px;top:957.00px;font-size:13.7px;line-height:13.7px;color:#212121;letter-spacing:0.049px;">Abigail Nilsson, Danni Miller +74</div>
<div class="t " style="left:1306.00px;top:955.00px;font-size:13.8px;line-height:13.8px;color:#212121;letter-spacing:0.440px;">13:02 19/11/2024</div>
<div class="t " style="left:1558.00px;top:955.00px;font-size:13.8px;line-height:13.8px;color:#212121;letter-spacing:0.440px;">13:07 19/11/2024</div>
<div class="a" style="left:147px;top:1042px;width:1686px;height:1px;background:#dcdcdc"></div>
<svg class="a" style="left:173px;top:1005px" width="18" height="19" viewBox="0 0 18 19">
<circle cx="14.4" cy="4.9" r="1.8" fill="#4f58c8"/>
<path d="M12.6 7.8H17.2V12.4A2.3 2.3 0 0 1 14.9 14.7H12.6z" fill="#4f58c8"/>
<circle cx="8.7" cy="3.9" r="2.5" fill="#7b83eb"/>
<path d="M4.9 7.8H13.1V14.2A3.9 3.9 0 0 1 4.9 14.2z" fill="#7b83eb"/>
<rect x="0" y="5.1" width="8.7" height="8.7" rx="0.4" fill="#4b53bc"/>
<path d="M5.5 13.8H8.7V12.6z" fill="#3a3f7a" opacity="0.5"/>
</svg>
<div class="t " style="left:199.30px;top:1010.00px;font-size:13.8px;line-height:13.8px;color:#212121;letter-spacing:0.182px;">Integration flows</div>
<div class="a badge" style="left:425px;top:1001.0px;background:#00c98e"></div>
<div class="t " style="left:439.20px;top:1010.00px;font-size:13.2px;line-height:13.2px;color:#fff;transform:translateX(-50%);">0</div>
<div class="t " style="left:648.40px;top:1010.00px;font-size:13.8px;line-height:13.8px;color:#212121;letter-spacing:0.280px;">Outgoing</div>
<div class="a pill" style="left:828px;top:1001.0px;width:90px;height:27.5px"></div>
<svg class="a" style="left:834px;top:1005px" width="20" height="20" viewBox="0 0 20 20">
<defs><clipPath id="c8341005"><circle cx="10" cy="10" r="10"/></clipPath></defs>
<g clip-path="url(#c8341005)"><rect width="20" height="20" fill="#6a6a6a"/>
<ellipse cx="10" cy="21" rx="9" ry="5.5" fill="#8a8a8a"/>
<rect x="8" y="13" width="4" height="5" fill="#dcb090"/>
<ellipse cx="10" cy="8.1" rx="6.2" ry="7" fill="#8a6a50"/>
<ellipse cx="10" cy="10.6" rx="4.6" ry="5.8" fill="#dcb090"/>
</g></svg>
<div class="t " style="left:860.60px;top:1010.00px;font-size:13.6px;line-height:13.6px;color:#212121;letter-spacing:-0.305px;">Rita Fox</div>
<div class="t " style="left:1063.20px;top:1012.00px;font-size:13.7px;line-height:13.7px;color:#212121;letter-spacing:0.027px;">Martin&nbsp; Arcand, Kadin Siphron</div>
<div class="t " style="left:1306.00px;top:1010.00px;font-size:13.8px;line-height:13.8px;color:#212121;letter-spacing:0.440px;">10:56 19/11/2024</div>
<div class="t " style="left:1558.00px;top:1010.00px;font-size:13.8px;line-height:13.8px;color:#212121;letter-spacing:0.440px;">10:59 19/11/2024</div>
<svg class="a" style="left:1796px;top:1012px" width="11" height="6" viewBox="0 0 11 6"><path d="M1.2 0.8L5.5 5L9.8 0.8" fill="none" stroke="#222" stroke-width="1.35" stroke-linecap="round" stroke-linejoin="round"/></svg>
<div class="a" style="left:147px;top:1100px;width:1686px;height:1px;background:#dcdcdc"></div>
<svg class="a" style="left:173px;top:1062px" width="18" height="19" viewBox="0 0 18 19">
<circle cx="14.4" cy="4.9" r="1.8" fill="#4f58c8"/>
<path d="M12.6 7.8H17.2V12.4A2.3 2.3 0 0 1 14.9 14.7H12.6z" fill="#4f58c8"/>
<circle cx="8.7" cy="3.9" r="2.5" fill="#7b83eb"/>
<path d="M4.9 7.8H13.1V14.2A3.9 3.9 0 0 1 4.9 14.2z" fill="#7b83eb"/>
<rect x="0" y="5.1" width="8.7" height="8.7" rx="0.4" fill="#4b53bc"/>
<path d="M5.5 13.8H8.7V12.6z" fill="#3a3f7a" opacity="0.5"/>
</svg>
<div class="t " style="left:199.30px;top:1067.00px;font-size:13.8px;line-height:13.8px;color:#212121;letter-spacing:-0.109px;">Daily sync</div>
<div class="a badge" style="left:425px;top:1057.5px;background:#00c98e"></div>
<div class="t " style="left:439.20px;top:1066.00px;font-size:13.2px;line-height:13.2px;color:#fff;transform:translateX(-50%);">0</div>
<div class="t " style="left:648.40px;top:1067.00px;font-size:13.8px;line-height:13.8px;color:#212121;letter-spacing:0.280px;">Outgoing</div>
<div class="a pill" style="left:828px;top:1055.5px;width:162px;height:31.5px"></div>
<svg class="a" style="left:838px;top:1062px" width="20" height="20" viewBox="0 0 20 20">
<defs><clipPath id="c8381062"><circle cx="10" cy="10" r="10"/></clipPath></defs>
<g clip-path="url(#c8381062)"><rect width="20" height="20" fill="#d0ccc8"/>
<ellipse cx="10" cy="21" rx="9" ry="5.5" fill="#3a3a3a"/>
<rect x="8" y="13" width="4" height="5" fill="#c8a080"/>
<ellipse cx="10" cy="7.9" rx="5.8" ry="7" fill="#6a5a4a"/>
<ellipse cx="10" cy="10.6" rx="4.6" ry="5.8" fill="#c8a080"/>
</g></svg>
<div class="t " style="left:864.70px;top:1067.00px;font-size:13.6px;line-height:13.6px;color:#212121;letter-spacing:0.041px;">Emerson Workman</div>
<div class="t " style="left:1063.20px;top:1069.00px;font-size:13.7px;line-height:13.7px;color:#212121;letter-spacing:-0.075px;">Makenna Schleifer, Gal Amram +4</div>
<div class="t " style="left:1306.00px;top:1067.00px;font-size:13.8px;line-height:13.8px;color:#212121;letter-spacing:0.440px;">09:07 18/11/2024</div>
<div class="t " style="left:1558.00px;top:1067.00px;font-size:13.8px;line-height:13.8px;color:#212121;letter-spacing:0.440px;">09:12 18/11/2024</div>
<svg class="a" style="left:1796px;top:1069px" width="11" height="6" viewBox="0 0 11 6"><path d="M1.2 0.8L5.5 5L9.8 0.8" fill="none" stroke="#222" stroke-width="1.35" stroke-linecap="round" stroke-linejoin="round"/></svg>
<div class="a" style="left:147px;top:1158px;width:1686px;height:1px;background:#dcdcdc"></div>
<svg class="a" style="left:173px;top:1120px" width="18" height="19" viewBox="0 0 18 19">
<circle cx="14.4" cy="4.9" r="1.8" fill="#4f58c8"/>
<path d="M12.6 7.8H17.2V12.4A2.3 2.3 0 0 1 14.9 14.7H12.6z" fill="#4f58c8"/>
<circle cx="8.7" cy="3.9" r="2.5" fill="#7b83eb"/>
<path d="M4.9 7.8H13.1V14.2A3.9 3.9 0 0 1 4.9 14.2z" fill="#7b83eb"/>
<rect x="0" y="5.1" width="8.7" height="8.7" rx="0.4" fill="#4b53bc"/>
<path d="M5.5 13.8H8.7V12.6z" fill="#3a3f7a" opacity="0.5"/>
</svg>
<div class="t " style="left:199.30px;top:1125.00px;font-size:13.8px;line-height:13.8px;color:#212121;letter-spacing:0.202px;">Weekly</div>
<div class="a badge" style="left:425px;top:1115.5px;background:#00c98e"></div>
<div class="t " style="left:439.20px;top:1124.00px;font-size:13.2px;line-height:13.2px;color:#fff;transform:translateX(-50%);">0</div>
<div class="t " style="left:648.40px;top:1125.00px;font-size:13.8px;line-height:13.8px;color:#212121;letter-spacing:0.280px;">Outgoing</div>
<div class="a pill" style="left:828px;top:1113.5px;width:140px;height:31.5px"></div>
<svg class="a" style="left:838px;top:1120px" width="20" height="20" viewBox="0 0 20 20">
<defs><clipPath id="c8381120"><circle cx="10" cy="10" r="10"/></clipPath></defs>
<g clip-path="url(#c8381120)"><rect width="20" height="20" fill="#6a7a50"/>
<ellipse cx="10" cy="21" rx="9" ry="5.5" fill="#3a4a30"/>
<rect x="8" y="13" width="4" height="5" fill="#b08060"/>
<ellipse cx="10" cy="7.3" rx="6.6" ry="7" fill="#3a3a3a"/>
<ellipse cx="10" cy="10.6" rx="4.6" ry="5.8" fill="#b08060"/>
</g></svg>
<div class="t " style="left:864.70px;top:1125.00px;font-size:13.6px;line-height:13.6px;color:#212121;letter-spacing:-0.019px;">Adam Trembley</div>
<div class="t " style="left:1063.20px;top:1127.00px;font-size:13.7px;line-height:13.7px;color:#212121;letter-spacing:0.035px;">Tom Silver, Noa Vitto</div>
<div class="t " style="left:1306.00px;top:1125.00px;font-size:13.8px;line-height:13.8px;color:#212121;letter-spacing:0.440px;">09:45 16/11/2024</div>
<div class="t " style="left:1558.00px;top:1125.00px;font-size:13.8px;line-height:13.8px;color:#212121;letter-spacing:0.440px;">09:51 16/11/2024</div>
<svg class="a" style="left:1796px;top:1127px" width="11" height="6" viewBox="0 0 11 6"><path d="M1.2 0.8L5.5 5L9.8 0.8" fill="none" stroke="#222" stroke-width="1.35" stroke-linecap="round" stroke-linejoin="round"/></svg>
<div class="a" style="left:147px;top:1216px;width:1686px;height:1px;background:#dcdcdc"></div>
<svg class="a" style="left:173px;top:1178px" width="18" height="19" viewBox="0 0 18 19">
<circle cx="14.4" cy="4.9" r="1.8" fill="#4f58c8"/>
<path d="M12.6 7.8H17.2V12.4A2.3 2.3 0 0 1 14.9 14.7H12.6z" fill="#4f58c8"/>
<circle cx="8.7" cy="3.9" r="2.5" fill="#7b83eb"/>
<path d="M4.9 7.8H13.1V14.2A3.9 3.9 0 0 1 4.9 14.2z" fill="#7b83eb"/>
<rect x="0" y="5.1" width="8.7" height="8.7" rx="0.4" fill="#4b53bc"/>
<path d="M5.5 13.8H8.7V12.6z" fill="#3a3f7a" opacity="0.5"/>
</svg>
<div class="t " style="left:199.30px;top:1183.00px;font-size:13.8px;line-height:13.8px;color:#212121;letter-spacing:-0.529px;">FE design</div>
<div class="t " style="left:425.00px;top:1183.00px;font-size:13.8px;line-height:13.8px;color:#212121;">NA</div>
<div class="t " style="left:648.40px;top:1183.00px;font-size:13.8px;line-height:13.8px;color:#212121;letter-spacing:0.280px;">Incoming</div>
<div class="a pill" style="left:828px;top:1171.5px;width:122px;height:31.5px"></div>
<svg class="a" style="left:838px;top:1178px" width="20" height="20" viewBox="0 0 20 20">
<defs><clipPath id="c8381178"><circle cx="10" cy="10" r="10"/></clipPath></defs>
<g clip-path="url(#c8381178)"><rect width="20" height="20" fill="#5a5a5a"/>
<ellipse cx="10" cy="21" rx="9" ry="5.5" fill="#888"/>
<rect x="8" y="13" width="4" height="5" fill="#dcb090"/>
<ellipse cx="10" cy="8.1" rx="6.4" ry="7" fill="#7a5a40"/>
<ellipse cx="10" cy="10.6" rx="4.6" ry="5.8" fill="#dcb090"/>
</g></svg>
<div class="t " style="left:864.70px;top:1183.00px;font-size:13.6px;line-height:13.6px;color:#212121;letter-spacing:0.055px;">Jane Brixton</div>
<div class="t " style="left:1063.20px;top:1185.00px;font-size:13.7px;line-height:13.7px;color:#212121;letter-spacing:-0.006px;">Tony Elevory, Maya tonimo</div>
<div class="t " style="left:1306.00px;top:1183.00px;font-size:13.8px;line-height:13.8px;color:#212121;letter-spacing:0.440px;">08:31 15/11/2024</div>
<div class="t " style="left:1558.00px;top:1183.00px;font-size:13.8px;line-height:13.8px;color:#212121;letter-spacing:0.440px;">08:34 15/11/2024</div>
</body></html>
